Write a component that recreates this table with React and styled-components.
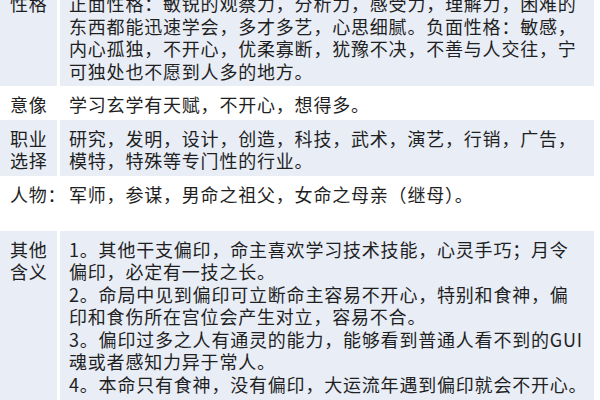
import React from "react";
import styled, { createGlobalStyle } from "styled-components";

const GlobalStyle = createGlobalStyle`
  html, body {
    margin: 0;
    padding: 0;
    background: #fff;
    overflow: hidden;
  }
  body {
    font-family: "Noto Sans CJK SC", "Noto Sans", sans-serif;
    color: #1f1f1f;
  }
`;

const Table = styled.div`
  width: 594px;
  margin-top: -15px;
  display: flex;
  flex-direction: column;
`;

const Row = styled.div`
  display: grid;
  grid-template-columns: 57px 534px;
  column-gap: 3px;
  min-height: ${({ $minHeight }) => ($minHeight ? `${$minHeight}px` : "auto")};
`;

const Cell = styled.div`
  background: ${({ $shaded }) => ($shaded ? "#e8edf6" : "transparent")};
  padding: 7px 0 ${({ $tail }) => ($tail ? "40px" : "4px")}
    ${({ $label }) => ($label ? "10px" : "9px")};
  font-size: 18px;
  letter-spacing: 0.8px;
  line-height: 22.5px;
  white-space: nowrap;
`;

const Line = styled.span`
  display: block;
`;

const rows = [
  {
    label: ["性格"],
    shaded: true,
    text: [
      "正面性格：敏锐的观察力，分析力，感受力，理解力，困难的",
      "东西都能迅速学会，多才多艺，心思细腻。负面性格：敏感，",
      "内心孤独，不开心，优柔寡断，犹豫不决，不善与人交往，宁",
      "可独处也不愿到人多的地方。",
    ],
  },
  {
    label: ["意像"],
    text: ["学习玄学有天赋，不开心，想得多。"],
  },
  {
    label: ["职业", "选择"],
    shaded: true,
    text: [
      "研究，发明，设计，创造，科技，武术，演艺，行销，广告，",
      "模特，特殊等专门性的行业。",
    ],
  },
  {
    label: ["人物："],
    minHeight: 55,
    text: ["军师，参谋，男命之祖父，女命之母亲（继母）。"],
  },
  {
    label: ["其他", "含义"],
    shaded: true,
    tail: true,
    text: [
      "1。其他干支偏印，命主喜欢学习技术技能，心灵手巧；月令",
      "偏印，必定有一技之长。",
      "2。命局中见到偏印可立断命主容易不开心，特别和食神，偏",
      "印和食伤所在宫位会产生对立，容易不合。",
      "3。偏印过多之人有通灵的能力，能够看到普通人看不到的GUI",
      "魂或者感知力异于常人。",
      "4。本命只有食神，没有偏印，大运流年遇到偏印就会不开心。",
    ],
  },
];

export default function App() {
  return (
    <>
      <GlobalStyle />
      <Table>
        {rows.map((row, i) => (
          <Row key={i} $minHeight={row.minHeight}>
            <Cell $label $shaded={row.shaded} $tail={row.tail}>
              {row.label.map((l, j) => (
                <Line key={j}>{l}</Line>
              ))}
            </Cell>
            <Cell $shaded={row.shaded} $tail={row.tail}>
              {row.text.map((t, j) => (
                <Line key={j}>{t}</Line>
              ))}
            </Cell>
          </Row>
        ))}
      </Table>
    </>
  );
}
